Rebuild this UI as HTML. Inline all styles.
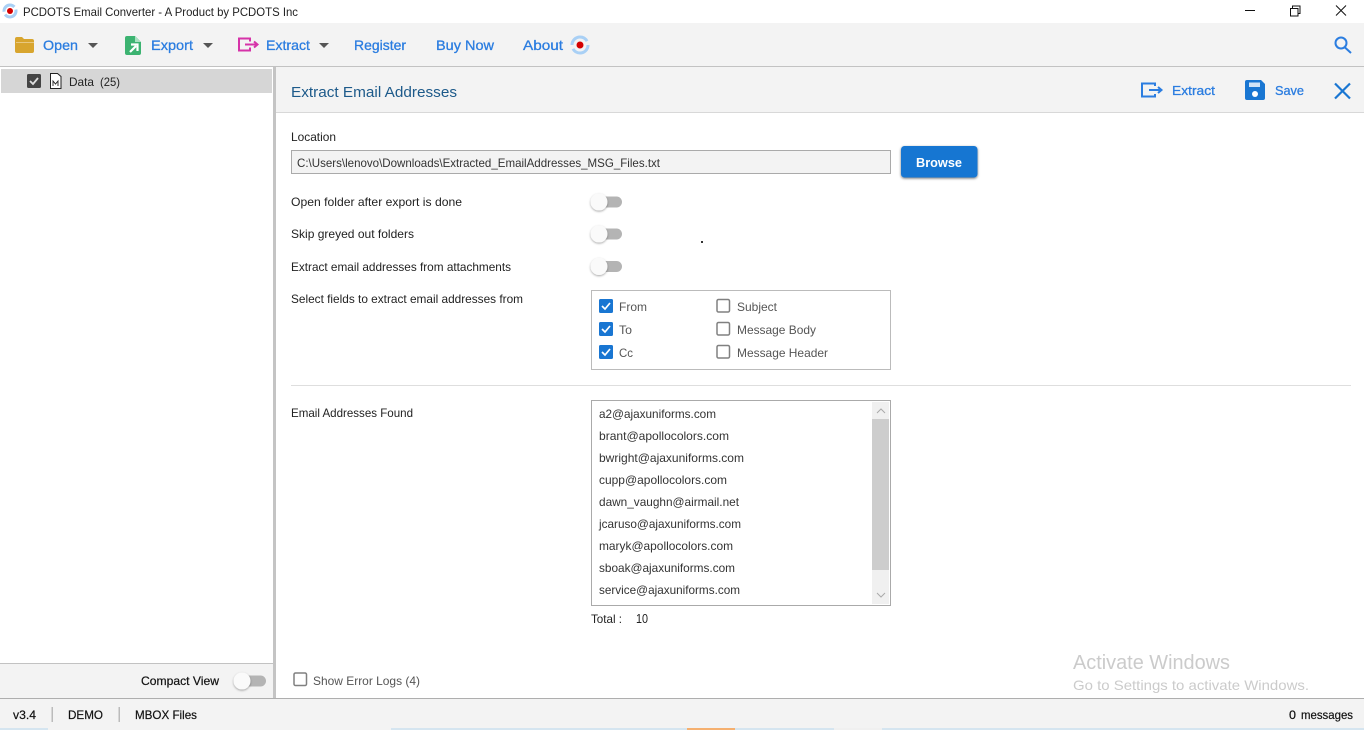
<!DOCTYPE html>
<html lang="en"><head><meta charset="utf-8"><title>PCDOTS Email Converter</title>
<style>
html,body{margin:0;padding:0;width:1364px;height:730px;overflow:hidden;background:#fff}
svg{display:block}
text{font-family:"Liberation Sans",Arial,sans-serif;font-size:12px;fill:#333;white-space:pre}
.t{font-size:12px;fill:#222}
.nav{font-size:14px;fill:#2b7de0;stroke:#2b7de0;stroke-width:.3}
.s{stroke:#111;stroke-width:.2;fill:#111}
.l{fill:#555;font-size:12px}
.e{fill:#333;font-size:12px}
</style></head><body>
<svg width="1364" height="730" viewBox="0 0 1364 730" xmlns="http://www.w3.org/2000/svg">
<defs>
<filter id="k" x="-40%" y="-40%" width="180%" height="180%"><feDropShadow dx="0" dy="1" stdDeviation="1" flood-color="#000" flood-opacity=".35"/></filter>
<filter id="b" x="-10%" y="-20%" width="120%" height="150%"><feDropShadow dx="0" dy="1" stdDeviation="1.2" flood-color="#000" flood-opacity=".55"/></filter>
</defs>
<rect width="1364" height="730" fill="#fff"/>
<!-- title -->
<circle cx="10" cy="11" r="6" fill="none" stroke="#a9d0f5" stroke-width="3" stroke-dasharray="15 3"/>
<circle cx="10" cy="11" r="3" fill="#d40000"/>
<text x="23" y="16" textLength="275" lengthAdjust="spacingAndGlyphs" class="t">PCDOTS Email Converter - A Product by PCDOTS Inc</text>
<path d="M1245 10.5h10" stroke="#111" fill="none"/>
<path d="M1290.5 8.5h7.5v7.5h-7.5zM1292.5 8.5v-2.500h7.500v7.500h-2" stroke="#111" fill="none"/>
<path d="M1336 5.500l10 10M1346 5.500l-10 10" stroke="#111" fill="none"/>
<!-- toolbar -->
<rect y="23" width="1364" height="43" fill="#f3f3f3"/>
<rect y="66" width="1364" height="1" fill="#c2c2c2"/>
<path d="M15 39q0-2 2-2h5l2 2h8q2 0 2 2v10q0 2-2 2H17q-2 0-2-2z" fill="#d8a52e"/>
<path d="M16 42.500h18" stroke="#e8c880" stroke-width="1" fill="none"/>
<text x="43" y="50" textLength="35" lengthAdjust="spacingAndGlyphs" class="nav">Open</text>
<path d="M88 43h10l-5 5z" fill="#555"/>
<path d="M125 38q0-2 2-2h8l6 6v11q0 2-2 2h-12q-2 0-2-2z" fill="#3cb371"/>
<path d="M135 36l6 6h-6z" fill="#a8e0c0"/>
<path d="M130 52l6-6M131 44.500h6.500v6.500" stroke="#fff" stroke-width="2.200" fill="none"/>
<text x="151" y="50" textLength="42" lengthAdjust="spacingAndGlyphs" class="nav">Export</text>
<path d="M203 43h10l-5 5z" fill="#555"/>
<path d="M250 41.500v-3h-11v12h11v-3" fill="none" stroke="#d633a8" stroke-width="2"/>
<path d="M245 44.500h12M254 41.500l3.500 3-3.500 3" fill="none" stroke="#d633a8" stroke-width="2"/>
<text x="266" y="50" textLength="44" lengthAdjust="spacingAndGlyphs" class="nav">Extract</text>
<path d="M319 43h10l-5 5z" fill="#555"/>
<text x="354" y="50" textLength="52" lengthAdjust="spacingAndGlyphs" class="nav">Register</text>
<text x="436" y="50" textLength="58" lengthAdjust="spacingAndGlyphs" class="nav">Buy Now</text>
<text x="523" y="50" textLength="40" lengthAdjust="spacingAndGlyphs" class="nav">About</text>
<circle cx="580" cy="45" r="8" fill="none" stroke="#a9d0f5" stroke-width="3" stroke-dasharray="21 4"/>
<circle cx="580" cy="45" r="3.500" fill="#d40000"/>
<circle cx="1341" cy="43" r="5.500" fill="none" stroke="#2b7de0" stroke-width="2"/>
<path d="M1345 47.500l6 5.500" stroke="#2b7de0" stroke-width="2" fill="none"/>
<!-- left -->
<rect x="1" y="69" width="271" height="24" fill="#d6d6d6"/>
<rect x="27" y="74" width="14" height="14" rx="1.500" fill="#444"/>
<path d="M30 81l3 3 5-6" stroke="#ddd" stroke-width="1.800" fill="none"/>
<path d="M50.500 73.500h7l3.500 3v12h-10.500z" fill="#fff" stroke="#222"/>
<path d="M53 86v-5l2.500 3 2.500-3v5" stroke="#222" fill="none" stroke-width=".9"/>
<text x="69" y="86" textLength="25" lengthAdjust="spacingAndGlyphs" class="t">Data</text>
<text x="100" y="86" textLength="20" lengthAdjust="spacingAndGlyphs" class="t">(25)</text>
<rect x="273" y="67" width="3" height="631" fill="#c4c4c4"/>
<rect y="664" width="273" height="34" fill="#f3f3f3"/>
<rect y="663" width="273" height="1" fill="#c2c2c2"/>
<text x="141" y="685" textLength="78" lengthAdjust="spacingAndGlyphs" class="s">Compact View</text>
<rect x="240" y="675.500" width="26" height="11" rx="5.500" fill="#b4b4b4"/>
<circle cx="242" cy="681" r="8.500" fill="#fafafa" filter="url(#k)"/>
<!-- right header -->
<rect x="276" y="67" width="1088" height="45" fill="#f3f3f3"/>
<rect x="276" y="112" width="1088" height="1" fill="#d8d8d8"/>
<text x="291" y="97" textLength="166" lengthAdjust="spacingAndGlyphs" style="font-size:15px;fill:#1d5a8a">Extract Email Addresses</text>
<path d="M1155 86v-2.500h-13v13h13V94" fill="none" stroke="#2b7de0" stroke-width="2"/>
<path d="M1149 90h12M1158 87l3.500 3-3.500 3" fill="none" stroke="#2b7de0" stroke-width="2"/>
<text x="1172" y="95" textLength="43" lengthAdjust="spacingAndGlyphs" class="nav" style="font-size:13px">Extract</text>
<path d="M1245 82q0-2 2-2h14l4 4v14q0 2-2 2h-16q-2 0-2-2z" fill="#1976d2"/>
<rect x="1249" y="82.500" width="11" height="4.500" fill="#cfe3f7"/>
<circle cx="1255" cy="94" r="3" fill="#fff"/>
<text x="1275" y="95" textLength="29" lengthAdjust="spacingAndGlyphs" class="nav" style="font-size:13px">Save</text>
<path d="M1335 83.500l15 15M1350 83.500l-15 15" stroke="#1976d2" stroke-width="2.200" fill="none"/>
<!-- form -->
<text x="291" y="141" textLength="45" lengthAdjust="spacingAndGlyphs" class="t">Location</text>
<rect x="291.500" y="150.500" width="599" height="23" fill="#f3f3f3" stroke="#aaa"/>
<text x="297" y="167" textLength="363" lengthAdjust="spacingAndGlyphs" class="e">C:\Users\lenovo\Downloads\Extracted_EmailAddresses_MSG_Files.txt</text>
<rect x="901" y="146" width="76.500" height="31.500" rx="3.500" fill="#1976d2" filter="url(#b)"/>
<text x="916" y="167" textLength="46" lengthAdjust="spacingAndGlyphs" style="font-size:13px;font-weight:bold;fill:#fff">Browse</text>
<text x="291" y="206" textLength="171" lengthAdjust="spacingAndGlyphs" class="t">Open folder after export is done</text>
<text x="291" y="238" textLength="123" lengthAdjust="spacingAndGlyphs" class="t">Skip greyed out folders</text>
<text x="291" y="271" textLength="220" lengthAdjust="spacingAndGlyphs" class="t">Extract email addresses from attachments</text>
<text x="291" y="303" textLength="232" lengthAdjust="spacingAndGlyphs" class="t">Select fields to extract email addresses from</text>
<rect x="596" y="196.500" width="26" height="11" rx="5.500" fill="#b4b4b4"/>
<circle cx="599" cy="202" r="8.500" fill="#fafafa" filter="url(#k)"/>
<rect x="596" y="228.500" width="26" height="11" rx="5.500" fill="#b4b4b4"/>
<circle cx="599" cy="234" r="8.500" fill="#fafafa" filter="url(#k)"/>
<rect x="596" y="261" width="26" height="11" rx="5.500" fill="#b4b4b4"/>
<circle cx="599" cy="266.500" r="8.500" fill="#fafafa" filter="url(#k)"/>
<rect x="701" y="241" width="2" height="2" fill="#333"/>
<!-- fields -->
<rect x="591.500" y="290.500" width="299" height="79" fill="#fff" stroke="#bbb"/>
<rect x="599" y="299" width="14" height="14" rx="1.500" fill="#1976d2"/>
<path d="M602 306l3 3 5-6" stroke="#fff" stroke-width="1.700" fill="none"/>
<rect x="599" y="322" width="14" height="14" rx="1.500" fill="#1976d2"/>
<path d="M602 329l3 3 5-6" stroke="#fff" stroke-width="1.700" fill="none"/>
<rect x="599" y="345" width="14" height="14" rx="1.500" fill="#1976d2"/>
<path d="M602 352l3 3 5-6" stroke="#fff" stroke-width="1.700" fill="none"/>
<rect x="717" y="299.500" width="12.500" height="12.500" rx="1.500" fill="#fff" stroke="#808080" stroke-width="1.500"/>
<rect x="717" y="322.500" width="12.500" height="12.500" rx="1.500" fill="#fff" stroke="#808080" stroke-width="1.500"/>
<rect x="717" y="345.500" width="12.500" height="12.500" rx="1.500" fill="#fff" stroke="#808080" stroke-width="1.500"/>
<text x="619" y="311" textLength="28" lengthAdjust="spacingAndGlyphs" class="l">From</text>
<text x="619" y="334" textLength="13" lengthAdjust="spacingAndGlyphs" class="l">To</text>
<text x="619" y="357" textLength="14" lengthAdjust="spacingAndGlyphs" class="l">Cc</text>
<text x="737" y="311" textLength="40" lengthAdjust="spacingAndGlyphs" class="l">Subject</text>
<text x="737" y="334" textLength="79" lengthAdjust="spacingAndGlyphs" class="l">Message Body</text>
<text x="737" y="357" textLength="91" lengthAdjust="spacingAndGlyphs" class="l">Message Header</text>
<rect x="291" y="385" width="1060" height="1" fill="#dedede"/>
<text x="291" y="417" textLength="122" lengthAdjust="spacingAndGlyphs" class="t">Email Addresses Found</text>
<!-- list -->
<rect x="591.500" y="400.500" width="299" height="205" fill="#fff" stroke="#aaa"/>
<rect x="872" y="402" width="17" height="202" fill="#f0f0f0"/>
<rect x="872" y="419" width="17" height="151" fill="#cdcdcd"/>
<path d="M877 413l4-4 4 4" fill="none" stroke="#aaa"/>
<path d="M877 593l4 4 4-4" fill="none" stroke="#aaa"/>
<text x="599" y="418" textLength="117" lengthAdjust="spacingAndGlyphs" class="e">a2@ajaxuniforms.com</text>
<text x="599" y="440" textLength="130" lengthAdjust="spacingAndGlyphs" class="e">brant@apollocolors.com</text>
<text x="599" y="462" textLength="145" lengthAdjust="spacingAndGlyphs" class="e">bwright@ajaxuniforms.com</text>
<text x="599" y="484" textLength="128" lengthAdjust="spacingAndGlyphs" class="e">cupp@apollocolors.com</text>
<text x="599" y="506" textLength="140" lengthAdjust="spacingAndGlyphs" class="e">dawn_vaughn@airmail.net</text>
<text x="599" y="528" textLength="142" lengthAdjust="spacingAndGlyphs" class="e">jcaruso@ajaxuniforms.com</text>
<text x="599" y="550" textLength="134" lengthAdjust="spacingAndGlyphs" class="e">maryk@apollocolors.com</text>
<text x="599" y="572" textLength="136" lengthAdjust="spacingAndGlyphs" class="e">sboak@ajaxuniforms.com</text>
<text x="599" y="594" textLength="141" lengthAdjust="spacingAndGlyphs" class="e">service@ajaxuniforms.com</text>
<text x="591" y="623" textLength="31" lengthAdjust="spacingAndGlyphs" class="t">Total :</text>
<text x="636" y="623" textLength="12" lengthAdjust="spacingAndGlyphs" style="font-size:13px;fill:#222">10</text>
<rect x="294" y="673" width="12.500" height="12.500" rx="1.500" fill="#fff" stroke="#808080" stroke-width="1.500"/>
<text x="313" y="685" textLength="107" lengthAdjust="spacingAndGlyphs" class="l">Show Error Logs (4)</text>
<text x="1073" y="669" textLength="157" lengthAdjust="spacingAndGlyphs" style="font-size:20px;fill:#cbcbcb">Activate Windows</text>
<text x="1073" y="690" textLength="236" lengthAdjust="spacingAndGlyphs" style="font-size:14px;fill:#cbcbcb">Go to Settings to activate Windows.</text>
<!-- status -->
<rect y="698" width="1364" height="30" fill="#f3f3f3"/>
<rect y="698" width="1364" height="1" fill="#aeaeae"/>
<rect y="728" width="1364" height="2" fill="#d5e5f0"/>
<rect x="48" y="728" width="343" height="2" fill="#f3f3f3"/>
<rect x="687" y="728" width="48" height="2" fill="#f5b070"/>
<rect x="834" y="728" width="48" height="2" fill="#f0f0f0"/>
<text x="13" y="719" textLength="23" lengthAdjust="spacingAndGlyphs" class="s">v3.4</text>
<rect x="51.500" y="707" width="1.500" height="15" fill="#bbb"/>
<text x="68" y="719" textLength="35" lengthAdjust="spacingAndGlyphs" class="s">DEMO</text>
<rect x="118.500" y="707" width="1.500" height="15" fill="#bbb"/>
<text x="135" y="719" textLength="62" lengthAdjust="spacingAndGlyphs" class="s">MBOX Files</text>
<text x="1289" y="719" textLength="7" lengthAdjust="spacingAndGlyphs" class="s">0</text>
<text x="1301" y="719" textLength="52" lengthAdjust="spacingAndGlyphs" class="s">messages</text>
</svg>
</body></html>
